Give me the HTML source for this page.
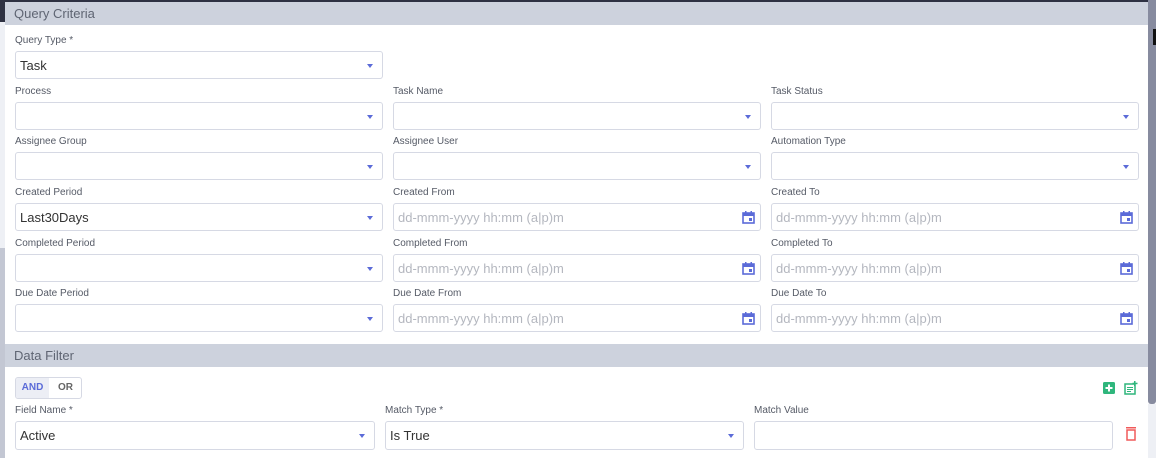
<!DOCTYPE html>
<html><head><style>
*{box-sizing:border-box;margin:0;padding:0}
body{width:1156px;height:458px;overflow:hidden;background:#fff;font-family:"Liberation Sans",sans-serif;position:relative}
.abs{position:absolute}
.band{position:absolute;left:5px;width:1143px;height:23px;background:#cdd2dd;color:#5f6573;font-size:13px;line-height:24px;padding-left:9px}
.lbl{position:absolute;font-size:10px;color:#555a66}
.inp{position:absolute;height:28px;border:1px solid #d6d9e4;border-radius:3px;font-size:13px;color:#333;line-height:28px;padding-left:4px;background:#fff}
.ph{color:#b4b7bf}
.arr{position:absolute;right:9px;top:12px;width:0;height:0;border-left:3.5px solid transparent;border-right:3.5px solid transparent;border-top:4px solid #5b6bd8}
.cal{position:absolute;right:5px;top:7px}
</style></head><body>
<div class="abs" style="left:0;top:0;width:1156px;height:2px;background:#2e3142"></div>
<div class="abs" style="left:0;top:0;width:5px;height:22px;background:#2e3142"></div>
<div class="abs" style="left:0;top:22px;width:5px;height:226px;background:#eef0f5"></div>
<div class="abs" style="left:0;top:248px;width:5px;height:210px;background:#c3c7d3"></div>
<div class="abs" style="left:1148px;top:0;width:8px;height:404px;background:#878b9f;border-radius:0 0 3px 3px"></div>
<div class="abs" style="left:1148px;top:404px;width:8px;height:54px;background:#eef0f5"></div>
<div class="abs" style="left:1153px;top:29px;width:3px;height:16px;background:#111"></div>

<div class="band" style="top:2px">Query Criteria</div>

<div class="lbl" style="left:15px;top:35px">Query Type *</div>
<div class="inp" style="left:15px;top:51px;width:368px">Task<span class="arr"></span></div>

<div class="lbl" style="left:15px;top:86px">Process</div>
<div class="lbl" style="left:393px;top:86px">Task Name</div>
<div class="lbl" style="left:771px;top:86px">Task Status</div>
<div class="inp" style="left:15px;top:102px;width:368px"><span class="arr"></span></div>
<div class="inp" style="left:393px;top:102px;width:368px"><span class="arr"></span></div>
<div class="inp" style="left:771px;top:102px;width:368px"><span class="arr"></span></div>

<div class="lbl" style="left:15px;top:136px">Assignee Group</div>
<div class="lbl" style="left:393px;top:136px">Assignee User</div>
<div class="lbl" style="left:771px;top:136px">Automation Type</div>
<div class="inp" style="left:15px;top:152px;width:368px"><span class="arr"></span></div>
<div class="inp" style="left:393px;top:152px;width:368px"><span class="arr"></span></div>
<div class="inp" style="left:771px;top:152px;width:368px"><span class="arr"></span></div>

<div class="lbl" style="left:15px;top:187px">Created Period</div>
<div class="lbl" style="left:393px;top:187px">Created From</div>
<div class="lbl" style="left:771px;top:187px">Created To</div>
<div class="inp" style="left:15px;top:203px;width:368px">Last30Days<span class="arr"></span></div>
<div class="inp" style="left:393px;top:203px;width:368px"><span class="ph">dd-mmm-yyyy hh:mm (a|p)m</span><svg class="cal" width="13" height="13" viewBox="0 0 13 13"><rect x="1" y="2" width="11" height="10" fill="none" stroke="#5b6bd8" stroke-width="1.6"/><rect x="1" y="2" width="11" height="3" fill="#5b6bd8"/><rect x="3" y="0" width="1.5" height="3" fill="#5b6bd8"/><rect x="8.5" y="0" width="1.5" height="3" fill="#5b6bd8"/><rect x="7" y="7" width="3" height="3" fill="#5b6bd8"/></svg></div>
<div class="inp" style="left:771px;top:203px;width:368px"><span class="ph">dd-mmm-yyyy hh:mm (a|p)m</span><svg class="cal" width="13" height="13" viewBox="0 0 13 13"><rect x="1" y="2" width="11" height="10" fill="none" stroke="#5b6bd8" stroke-width="1.6"/><rect x="1" y="2" width="11" height="3" fill="#5b6bd8"/><rect x="3" y="0" width="1.5" height="3" fill="#5b6bd8"/><rect x="8.5" y="0" width="1.5" height="3" fill="#5b6bd8"/><rect x="7" y="7" width="3" height="3" fill="#5b6bd8"/></svg></div>

<div class="lbl" style="left:15px;top:238px">Completed Period</div>
<div class="lbl" style="left:393px;top:238px">Completed From</div>
<div class="lbl" style="left:771px;top:238px">Completed To</div>
<div class="inp" style="left:15px;top:254px;width:368px"><span class="arr"></span></div>
<div class="inp" style="left:393px;top:254px;width:368px"><span class="ph">dd-mmm-yyyy hh:mm (a|p)m</span><svg class="cal" width="13" height="13" viewBox="0 0 13 13"><rect x="1" y="2" width="11" height="10" fill="none" stroke="#5b6bd8" stroke-width="1.6"/><rect x="1" y="2" width="11" height="3" fill="#5b6bd8"/><rect x="3" y="0" width="1.5" height="3" fill="#5b6bd8"/><rect x="8.5" y="0" width="1.5" height="3" fill="#5b6bd8"/><rect x="7" y="7" width="3" height="3" fill="#5b6bd8"/></svg></div>
<div class="inp" style="left:771px;top:254px;width:368px"><span class="ph">dd-mmm-yyyy hh:mm (a|p)m</span><svg class="cal" width="13" height="13" viewBox="0 0 13 13"><rect x="1" y="2" width="11" height="10" fill="none" stroke="#5b6bd8" stroke-width="1.6"/><rect x="1" y="2" width="11" height="3" fill="#5b6bd8"/><rect x="3" y="0" width="1.5" height="3" fill="#5b6bd8"/><rect x="8.5" y="0" width="1.5" height="3" fill="#5b6bd8"/><rect x="7" y="7" width="3" height="3" fill="#5b6bd8"/></svg></div>

<div class="lbl" style="left:15px;top:288px">Due Date Period</div>
<div class="lbl" style="left:393px;top:288px">Due Date From</div>
<div class="lbl" style="left:771px;top:288px">Due Date To</div>
<div class="inp" style="left:15px;top:304px;width:368px"><span class="arr"></span></div>
<div class="inp" style="left:393px;top:304px;width:368px"><span class="ph">dd-mmm-yyyy hh:mm (a|p)m</span><svg class="cal" width="13" height="13" viewBox="0 0 13 13"><rect x="1" y="2" width="11" height="10" fill="none" stroke="#5b6bd8" stroke-width="1.6"/><rect x="1" y="2" width="11" height="3" fill="#5b6bd8"/><rect x="3" y="0" width="1.5" height="3" fill="#5b6bd8"/><rect x="8.5" y="0" width="1.5" height="3" fill="#5b6bd8"/><rect x="7" y="7" width="3" height="3" fill="#5b6bd8"/></svg></div>
<div class="inp" style="left:771px;top:304px;width:368px"><span class="ph">dd-mmm-yyyy hh:mm (a|p)m</span><svg class="cal" width="13" height="13" viewBox="0 0 13 13"><rect x="1" y="2" width="11" height="10" fill="none" stroke="#5b6bd8" stroke-width="1.6"/><rect x="1" y="2" width="11" height="3" fill="#5b6bd8"/><rect x="3" y="0" width="1.5" height="3" fill="#5b6bd8"/><rect x="8.5" y="0" width="1.5" height="3" fill="#5b6bd8"/><rect x="7" y="7" width="3" height="3" fill="#5b6bd8"/></svg></div>

<div class="band" style="top:344px">Data Filter</div>

<div class="abs" style="left:15px;top:377px;width:67px;height:22px;border:1px solid #d6d9e4;border-radius:3px;font-size:10px;font-weight:bold;line-height:20px;overflow:hidden">
 <span class="abs" style="left:0;top:0;width:33px;height:20px;background:#eceef5;color:#5b6bd8;text-align:center">AND</span>
 <span class="abs" style="left:33px;top:0;width:33px;height:20px;color:#666;text-align:center">OR</span>
</div>
<svg class="abs" style="left:1103px;top:382px" width="12" height="12"><rect width="12" height="12" rx="1.5" fill="#2fb67c"/><rect x="5" y="2.5" width="2" height="7" fill="#fff"/><rect x="2.5" y="5" width="7" height="2" fill="#fff"/></svg>
<svg class="abs" style="left:1124px;top:381px" width="14" height="14"><rect x="1" y="3" width="10" height="10" fill="none" stroke="#2fb67c" stroke-width="1.5"/><rect x="3" y="6" width="6" height="1" fill="#2fb67c"/><rect x="3" y="8" width="6" height="1" fill="#2fb67c"/><rect x="3" y="10" width="4" height="1" fill="#2fb67c"/><rect x="10" y="0" width="1.5" height="5" fill="#2fb67c"/><rect x="8.5" y="1.7" width="5" height="1.5" fill="#2fb67c"/></svg>

<div class="lbl" style="left:15px;top:405px">Field Name *</div>
<div class="lbl" style="left:385px;top:405px">Match Type *</div>
<div class="lbl" style="left:754px;top:405px">Match Value</div>
<div class="inp" style="left:15px;top:421px;width:360px;height:29px">Active<span class="arr"></span></div>
<div class="inp" style="left:385px;top:421px;width:359px;height:29px">Is True<span class="arr"></span></div>
<div class="inp" style="left:754px;top:421px;width:359px;height:29px"></div>
<svg class="abs" style="left:1125px;top:427px" width="12" height="14"><rect x="1" y="0" width="10" height="1.5" fill="#f05a5a"/><rect x="2" y="3" width="8" height="10" fill="none" stroke="#f05a5a" stroke-width="1.5"/></svg>
</body></html>
